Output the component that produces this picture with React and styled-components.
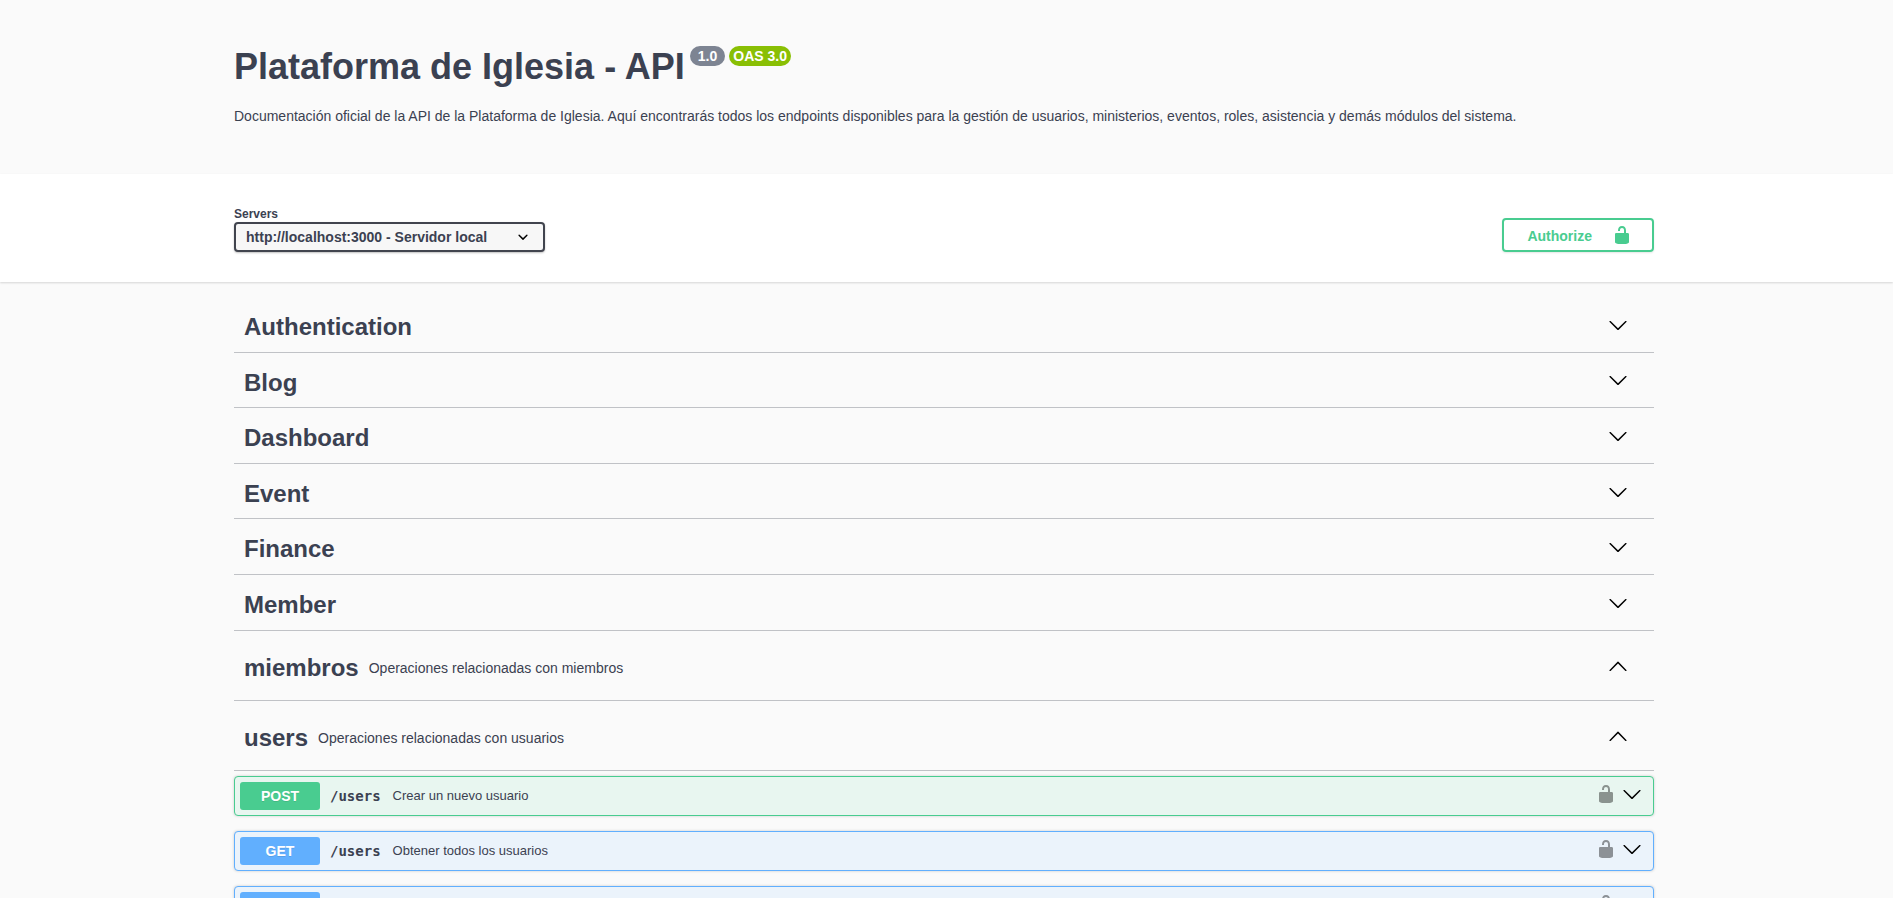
import React, { useState } from "react";
import styled, { createGlobalStyle } from "styled-components";

const tags = [
  { name: "Authentication" },
  { name: "Blog" },
  { name: "Dashboard" },
  { name: "Event" },
  { name: "Finance" },
  { name: "Member" },
  {
    name: "miembros",
    description: "Operaciones relacionadas con miembros",
    open: true,
  },
  {
    name: "users",
    description: "Operaciones relacionadas con usuarios",
    open: true,
    operations: [
      { method: "POST", path: "/users", summary: "Crear un nuevo usuario" },
      { method: "GET", path: "/users", summary: "Obtener todos los usuarios" },
      { method: "GET" },
    ],
  },
];

const methodColors = {
  POST: { main: "#49cc90", background: "#e8f6f0" },
  GET: { main: "#61affe", background: "#ebf3fb" },
};

function Chevron({ up }) {
  return (
    <ArrowSvg viewBox="0 0 20 20" aria-hidden="true">
      {up ? (
        <path d="M17.418 14.908c.272.281.701.281.969 0s.271-.736 0-1.02L10.483 5.7a.669.669 0 0 0-.966 0l-7.907 8.188c-.27.283-.268.739 0 1.02s.701.279.969 0L10 7.451z" />
      ) : (
        <path d="M17.418 6.109c.272-.268.709-.268.979 0s.271.701 0 .969l-7.908 7.83c-.27.268-.707.268-.979 0l-7.908-7.83c-.27-.268-.27-.701 0-.969s.709-.268.979 0L10 13.25z" />
      )}
    </ArrowSvg>
  );
}

function Unlocked() {
  return (
    <LockSvg viewBox="0 0 20 20" aria-hidden="true">
      <path d="M15.8 8H14V5.6C14 2.703 12.665 1 10 1 7.334 1 6 2.703 6 5.6V6h2v-.801C8 3.754 8.797 3 10 3c1.203 0 2 .754 2 2.199V8H4c-.553 0-1 .646-1 1.199V17c0 .549.428 1.139.951 1.307l1.197.387C5.672 18.861 6.55 19 7.1 19h5.8c.549 0 1.428-.139 1.951-.307l1.196-.387c.524-.167.953-.757.953-1.306V9.199C17 8.646 16.352 8 15.8 8z" />
    </LockSvg>
  );
}

function Operation({ method, path, summary }) {
  return (
    <OpBlock $method={method}>
      <OpSummary>
        <OpControl>
          <Method $method={method}>{method}</Method>
          <Path>{path}</Path>
          <OpDescription>{summary}</OpDescription>
        </OpControl>
        <LockButton aria-label="authorization button unlocked">
          <Unlocked />
        </LockButton>
        <IconButton aria-label="expand operation">
          <Chevron />
        </IconButton>
      </OpSummary>
    </OpBlock>
  );
}

function TagSection({ tag }) {
  const [open, setOpen] = useState(Boolean(tag.open));
  return (
    <section>
      <TagHeader>
        <span>{tag.name}</span>
        <TagDescription>
          {tag.description && <p>{tag.description}</p>}
        </TagDescription>
        <IconButton
          aria-expanded={open}
          aria-label={tag.name}
          onClick={() => setOpen(!open)}
        >
          <Chevron up={open} />
        </IconButton>
      </TagHeader>
      {open && tag.operations?.map((op, index) => (
        <Operation key={index} {...op} />
      ))}
    </section>
  );
}

function App() {
  return (
    <Page>
      <GlobalStyle />
      <Wrapper>
        <Info>
          <Title>
            Plataforma de Iglesia - API
            <Badges>
              <Version>1.0</Version>
              <Version $oas>OAS 3.0</Version>
            </Badges>
          </Title>
          <Description>
            Documentación oficial de la API de la Plataforma de Iglesia. Aquí
            encontrarás todos los endpoints disponibles para la gestión de
            usuarios, ministerios, eventos, roles, asistencia y demás módulos
            del sistema.
          </Description>
        </Info>
      </Wrapper>
      <SchemeContainer>
        <Wrapper>
          <Schemes>
            <div>
              <ServersLabel htmlFor="servers">Servers</ServersLabel>
              <SelectBox>
                <Select id="servers">
                  <option>http://localhost:3000 - Servidor local</option>
                </Select>
                <SelectArrow viewBox="0 0 20 20" aria-hidden="true">
                  <path d="M13.418 7.859a.695.695 0 0 1 .978 0 .68.68 0 0 1 0 .969l-3.908 3.83a.697.697 0 0 1-.979 0l-3.908-3.83a.68.68 0 0 1 0-.969.695.695 0 0 1 .978 0L10 11z" />
                </SelectArrow>
              </SelectBox>
            </div>
            <AuthorizeButton>
              <span>Authorize</span>
              <Unlocked />
            </AuthorizeButton>
          </Schemes>
        </Wrapper>
      </SchemeContainer>
      <Wrapper>
        {tags.map((tag) => (
          <TagSection key={tag.name} tag={tag} />
        ))}
      </Wrapper>
    </Page>
  );
}

const GlobalStyle = createGlobalStyle`
  *, *::before, *::after {
    box-sizing: border-box;
  }
  body {
    margin: 0;
    background: #fafafa;
  }
`;

const Page = styled.main`
  color: #3b4151;
  font-family: "Liberation Sans", Arial, sans-serif;
  line-height: 1.15;
`;

const Wrapper = styled.div`
  width: 100%;
  max-width: 1465px;
  margin: 0 auto;
  padding: 0 25px 0 20px;
`;

const Info = styled.header`
  padding: 46px 0 49px;
`;

const Title = styled.h1`
  display: flex;
  align-items: flex-start;
  gap: 5px;
  margin: 0;
  font-size: 36px;
  line-height: 42px;
`;

const Badges = styled.span`
  display: flex;
  gap: 4px;
`;

const Version = styled.small`
  padding: 2px ${({ $oas }) => ($oas ? "4px" : "8px")};
  border-radius: 57px;
  background: ${({ $oas }) => ($oas ? "#89bf04" : "#7d8492")};
  color: #fff;
  font-size: 14px;
  line-height: 16px;
`;

const Description = styled.p`
  margin: 19px 0 0;
  font-size: 14px;
  line-height: 18px;
`;

const SchemeContainer = styled.div`
  margin-bottom: 20px;
  padding: 30px 0;
  background: #fff;
  box-shadow: 0 1px 2px rgba(0, 0, 0, 0.15);
`;

const Schemes = styled.div`
  display: flex;
  align-items: flex-end;
  justify-content: space-between;
`;

const ServersLabel = styled.label`
  display: block;
  padding-top: 2px;
  font-size: 12px;
  font-weight: 700;
  line-height: 16px;
`;

const SelectBox = styled.div`
  display: grid;
  align-items: center;
`;

const Select = styled.select`
  grid-area: 1 / 1;
  height: 30px;
  padding: 0 55px 0 10px;
  appearance: none;
  border: 2px solid #41444e;
  border-radius: 4px;
  background: #f7f7f7;
  box-shadow: 0 1px 2px rgba(0, 0, 0, 0.25);
  color: #3b4151;
  font-family: inherit;
  font-size: 14px;
  font-weight: 700;
`;

const SelectArrow = styled.svg`
  grid-area: 1 / 1;
  justify-self: end;
  width: 20px;
  height: 20px;
  margin-right: 12px;
  pointer-events: none;
`;

const AuthorizeButton = styled.button`
  display: flex;
  align-items: center;
  gap: 20px;
  height: 34px;
  padding: 0 20px 0 23px;
  border: 2px solid #49cc90;
  border-radius: 4px;
  background: transparent;
  box-shadow: 0 1px 2px rgba(0, 0, 0, 0.1);
  color: #49cc90;
  font-family: inherit;
  font-size: 14px;
  font-weight: 700;
  cursor: pointer;

  span {
    padding-top: 2px;
  }
`;

const TagHeader = styled.h2`
  display: flex;
  align-items: center;
  margin: 0 0 5px;
  padding: 11px 20px 11px 10px;
  border-bottom: 1px solid rgba(59, 65, 81, 0.3);
  font-size: 24px;
`;

const TagDescription = styled.small`
  flex: 1;
  padding: 0 10px;
  font-size: 14px;
  font-weight: 400;

  p {
    margin: 13px 0;
  }
`;

const IconButton = styled.button`
  display: flex;
  padding: 0 6px 4px;
  border: none;
  background: none;
  color: #000;
  cursor: pointer;
`;

const LockButton = styled(IconButton)`
  padding-right: 0;
  opacity: 0.4;
`;

const ArrowSvg = styled.svg`
  width: 20px;
  height: 20px;
`;

const LockSvg = styled.svg`
  width: 20px;
  height: 20px;
  fill: currentColor;
`;

const OpBlock = styled.article`
  margin-bottom: 15px;
  border: 1px solid ${({ $method }) => methodColors[$method].main};
  border-radius: 4px;
  background: ${({ $method }) => methodColors[$method].background};
  box-shadow: 0 0 3px rgba(0, 0, 0, 0.19);
`;

const OpSummary = styled.div`
  display: flex;
  align-items: center;
  padding: 5px;
`;

const OpControl = styled.button`
  display: flex;
  flex: 1;
  align-items: center;
  gap: 10px;
  padding: 0;
  border: none;
  background: none;
  color: inherit;
  font-family: inherit;
  font-size: 13px;
  text-align: left;
  cursor: pointer;
`;

const Method = styled.span`
  width: 80px;
  border-radius: 3px;
  background: ${({ $method }) => methodColors[$method].main};
  color: #fff;
  font-size: 14px;
  font-weight: 700;
  line-height: 28px;
  text-align: center;
  text-shadow: 0 1px 0 rgba(0, 0, 0, 0.1);
`;

const Path = styled.span`
  padding-right: 2px;
  font-family: "DejaVu Sans Mono", monospace;
  font-size: 14px;
  font-weight: 700;
`;

const OpDescription = styled.span`
  flex: 1;
`;

export default App;
